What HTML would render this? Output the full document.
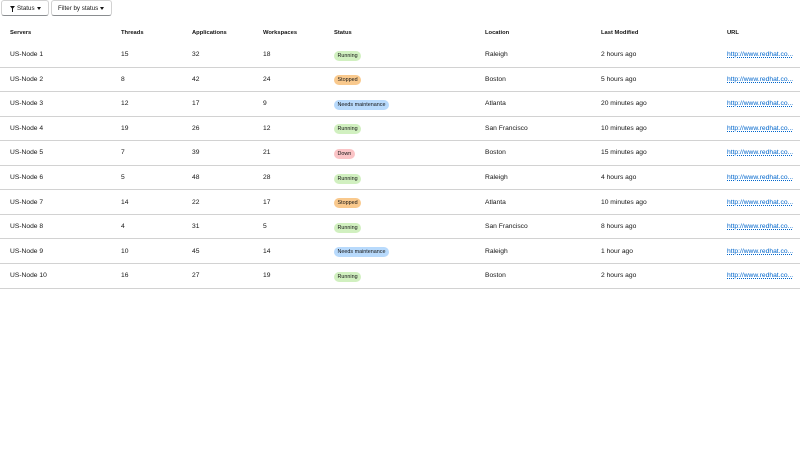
<!DOCTYPE html>
<html><head><style>
body{margin:0;width:800px;height:450px;background:#fff;font-family:"Liberation Sans",sans-serif;color:#151515;position:relative;overflow:hidden}
.btn{position:absolute;top:0;height:14px;border:1px solid #d2d2d2;border-bottom-color:#8a8d90;border-radius:3px;font-size:6.2px;box-sizing:content-box}
.btn span{position:absolute;top:1px;line-height:14px;white-space:nowrap}
.car{position:absolute;top:6px;width:0;height:0;border-left:2.5px solid transparent;border-right:2.5px solid transparent;border-top:3px solid #151515}
.row{position:absolute;left:0;width:800px;height:24.56px;border-bottom:1px solid #d2d2d2;box-sizing:border-box;font-size:6.7px}
.row span{position:absolute;top:0;height:23.5px;display:flex;align-items:center;white-space:nowrap}
.hd span{font-weight:bold;font-size:5.8px}
.c1{left:10px}.c2{left:121px}.c3{left:192px}.c4{left:263px}.c5{left:334px}.c6{left:485px}.c7{left:601px}.c8{left:727px}
.b{display:inline-block;line-height:10px;height:10px;padding:0 3.5px;border-radius:6px;font-size:5.4px;font-style:normal;margin-top:2px}
.r{background:#d1f0c0}.s{background:#f9c98d}.n{background:#b8dafc}.d{background:#fbc4c6}
a{color:#0066cc;text-decoration:underline dotted;}
</style></head><body>
<div class="btn" style="left:1px;width:46px;background:#fff"><svg style="position:absolute;left:8px;top:5px" width="5" height="6" viewBox="0 0 5 6"><path d="M0 0H5L3 2.5V6H2V2.5Z" fill="#151515"/></svg><span style="left:15px">Status</span><i class="car" style="left:35px"></i></div>
<div class="btn" style="left:51px;width:59px"><span style="left:6px">Filter by status</span><i class="car" style="left:48px"></i></div>
<div class="row hd" style="top:21px;height:23px;border:none"><span class="c1">Servers</span><span class="c2">Threads</span><span class="c3">Applications</span><span class="c4">Workspaces</span><span class="c5">Status</span><span class="c6">Location</span><span class="c7">Last Modified</span><span class="c8">URL</span></div>
<div class="row" style="top:43px"><span class="c1">US-Node 1</span><span class="c2">15</span><span class="c3">32</span><span class="c4">18</span><span class="c5"><i class="b r">Running</i></span><span class="c6">Raleigh</span><span class="c7">2 hours ago</span><span class="c8"><a>http://www.redhat.co...</a></span></div>
<div class="row" style="top:67.56px"><span class="c1">US-Node 2</span><span class="c2">8</span><span class="c3">42</span><span class="c4">24</span><span class="c5"><i class="b s">Stopped</i></span><span class="c6">Boston</span><span class="c7">5 hours ago</span><span class="c8"><a>http://www.redhat.co...</a></span></div>
<div class="row" style="top:92.12px"><span class="c1">US-Node 3</span><span class="c2">12</span><span class="c3">17</span><span class="c4">9</span><span class="c5"><i class="b n">Needs maintenance</i></span><span class="c6">Atlanta</span><span class="c7">20 minutes ago</span><span class="c8"><a>http://www.redhat.co...</a></span></div>
<div class="row" style="top:116.68px"><span class="c1">US-Node 4</span><span class="c2">19</span><span class="c3">26</span><span class="c4">12</span><span class="c5"><i class="b r">Running</i></span><span class="c6">San Francisco</span><span class="c7">10 minutes ago</span><span class="c8"><a>http://www.redhat.co...</a></span></div>
<div class="row" style="top:141.24px"><span class="c1">US-Node 5</span><span class="c2">7</span><span class="c3">39</span><span class="c4">21</span><span class="c5"><i class="b d">Down</i></span><span class="c6">Boston</span><span class="c7">15 minutes ago</span><span class="c8"><a>http://www.redhat.co...</a></span></div>
<div class="row" style="top:165.8px"><span class="c1">US-Node 6</span><span class="c2">5</span><span class="c3">48</span><span class="c4">28</span><span class="c5"><i class="b r">Running</i></span><span class="c6">Raleigh</span><span class="c7">4 hours ago</span><span class="c8"><a>http://www.redhat.co...</a></span></div>
<div class="row" style="top:190.36px"><span class="c1">US-Node 7</span><span class="c2">14</span><span class="c3">22</span><span class="c4">17</span><span class="c5"><i class="b s">Stopped</i></span><span class="c6">Atlanta</span><span class="c7">10 minutes ago</span><span class="c8"><a>http://www.redhat.co...</a></span></div>
<div class="row" style="top:214.92px"><span class="c1">US-Node 8</span><span class="c2">4</span><span class="c3">31</span><span class="c4">5</span><span class="c5"><i class="b r">Running</i></span><span class="c6">San Francisco</span><span class="c7">8 hours ago</span><span class="c8"><a>http://www.redhat.co...</a></span></div>
<div class="row" style="top:239.48px"><span class="c1">US-Node 9</span><span class="c2">10</span><span class="c3">45</span><span class="c4">14</span><span class="c5"><i class="b n">Needs maintenance</i></span><span class="c6">Raleigh</span><span class="c7">1 hour ago</span><span class="c8"><a>http://www.redhat.co...</a></span></div>
<div class="row" style="top:264.04px"><span class="c1">US-Node 10</span><span class="c2">16</span><span class="c3">27</span><span class="c4">19</span><span class="c5"><i class="b r">Running</i></span><span class="c6">Boston</span><span class="c7">2 hours ago</span><span class="c8"><a>http://www.redhat.co...</a></span></div>
</body></html>
